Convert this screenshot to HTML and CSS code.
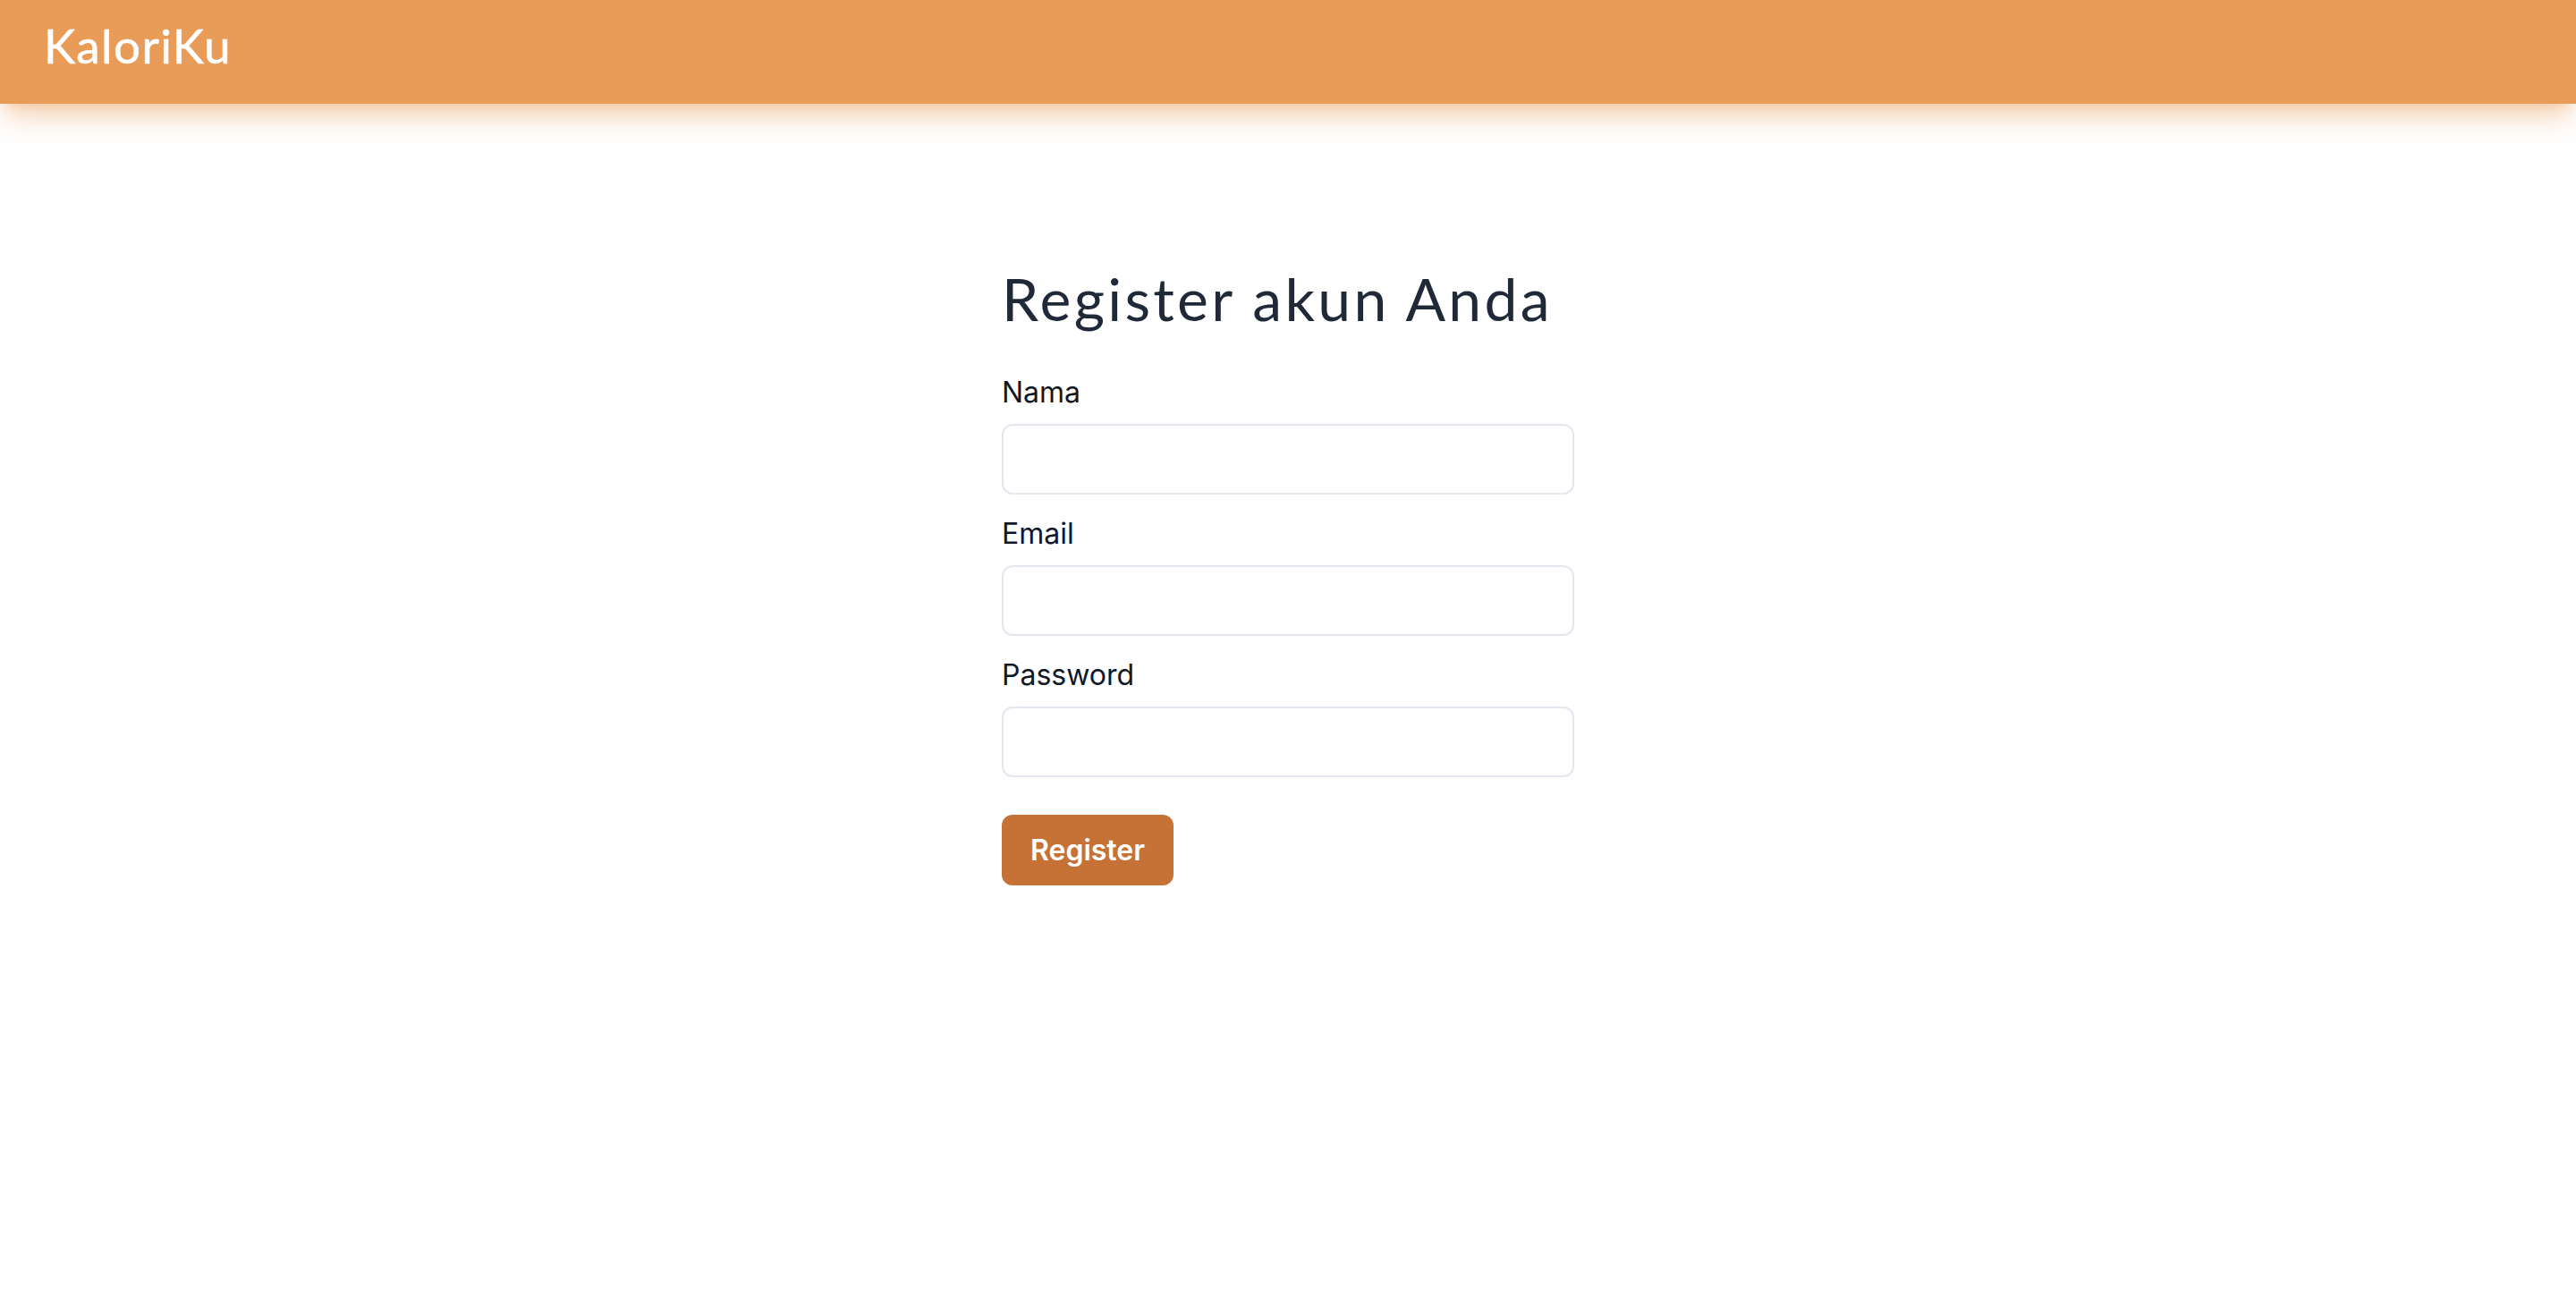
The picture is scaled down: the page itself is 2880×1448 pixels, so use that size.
FILE: index.html
```html
<!DOCTYPE html>
<html lang="id">
<head>
<meta charset="utf-8">
<title>KaloriKu - Register</title>
<link rel="stylesheet" href="styles.css">
</head>
<body>
<header class="topbar">
  <div class="logo">KaloriKu</div>
</header>
<main class="page">
  <form class="register-form">
    <h1 class="title">Register akun Anda</h1>
    <div class="field">
      <label class="label" for="nama">Nama</label>
      <input class="input" id="nama" type="text">
    </div>
    <div class="field">
      <label class="label" for="email">Email</label>
      <input class="input" id="email" type="email">
    </div>
    <div class="field">
      <label class="label" for="password">Password</label>
      <input class="input" id="password" type="password">
    </div>
    <button class="btn" type="button">Register</button>
  </form>
</main>
</body>
</html>
```
FILE: styles.css
```css
* { box-sizing: border-box; }
html, body { margin: 0; padding: 0; background: #ffffff; }
body { font-family: Inter, "Noto Sans", sans-serif; color: #111827; }

.topbar {
  height: 116px;
  background: #e99b58;
  display: flex;
  align-items: center;
  padding: 0 0 15px 49px;
  box-shadow: 0 20px 30px -6px rgba(233, 155, 88, 0.45), 0 8px 12px -8px rgba(233, 155, 88, 0.4);
  position: relative;
}
.logo {
  font-family: Lato, "Noto Sans", sans-serif;
  font-weight: 400;
  font-size: 53px;
  letter-spacing: 1.4px;
  color: #ffffff;
  line-height: 64px;
  -webkit-text-stroke: 0.6px #ffffff;
}

.page {
  display: flex;
  justify-content: center;
  padding-top: 182px;
}
.register-form {
  width: 640px;
  display: flex;
  flex-direction: column;
}
.title {
  margin: 0 0 45px 0;
  font-family: Lato, "Noto Sans", sans-serif;
  font-weight: 400;
  font-size: 66px;
  line-height: 72px;
  color: #1f2937;
  letter-spacing: 3.3px;
}
.field {
  display: flex;
  flex-direction: column;
  margin-bottom: 20px;
}
.field:last-of-type { margin-bottom: 42px; }
.label {
  font-size: 32px;
  line-height: 48px;
  margin-bottom: 11px;
  color: #111827;
}
.input {
  height: 79px;
  border: 2px solid #e3e7ef;
  border-radius: 12px;
  background: #fff;
  font-family: inherit;
  font-size: 32px;
  padding: 0 24px;
  outline: none;
}
.btn {
  align-self: flex-start;
  height: 79px;
  padding: 0 32px;
  background: #c67236;
  color: #ffffff;
  border: none;
  border-radius: 12px;
  font-family: Inter, sans-serif;
  font-weight: 600;
  font-size: 32px;
  line-height: 48px;
}
```
